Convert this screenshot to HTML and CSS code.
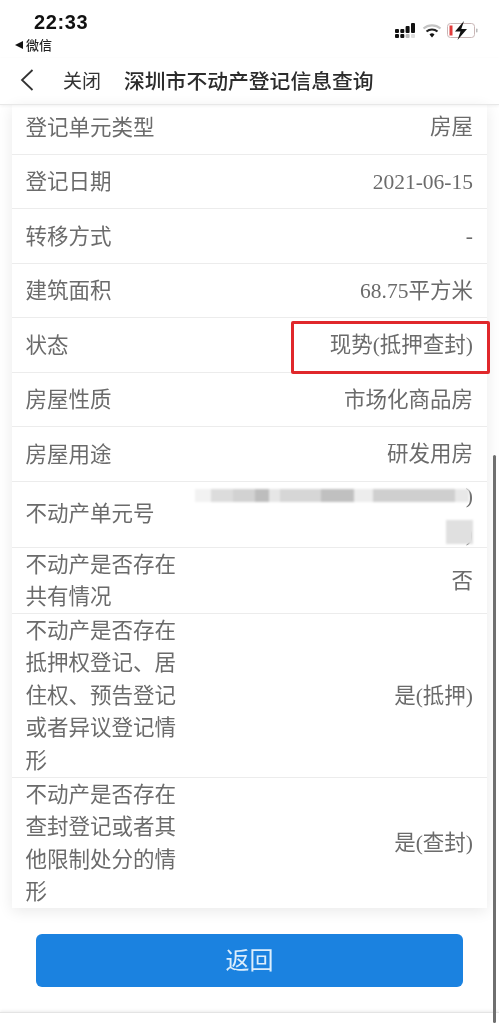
FILE: index.html
```html
<!DOCTYPE html>
<html lang="zh-CN">
<head>
<meta charset="utf-8">
<title>深圳市不动产登记信息查询</title>
<link rel="stylesheet" href="styles.css">
</head>
<body>
<div class="phone">
  <header class="status">
    <div class="status-left">
      <div class="time">22:33</div>
      <div class="source"><span class="tri"></span>微信</div>
    </div>
    <svg class="status-icons" width="84" height="20" viewBox="0 0 84 20">
      <g fill="#111">
        <rect x="0" y="9" width="4" height="4" rx="1"/><rect x="0" y="14" width="4" height="4" rx="1"/>
        <rect x="5.300" y="9" width="4" height="4" rx="1"/><rect x="5.300" y="14" width="4" height="4" rx="1"/>
        <rect x="10.600" y="6" width="4" height="7" rx="1"/><rect x="10.600" y="14" width="4" height="4" rx="1" fill="#bbb"/>
        <rect x="16" y="3" width="4" height="10" rx="1"/><rect x="16" y="14" width="4" height="4" rx="1" fill="#ddd"/>
      </g>
      <path d="M28.500 8.500a13 13 0 0 1 17 0" fill="none" stroke="#c4c4c4" stroke-width="2.200"/>
      <path d="M31.500 11.500a8.500 8.500 0 0 1 11 0" fill="none" stroke="#222" stroke-width="2.200"/>
      <path d="M34.500 14.500a3.500 3.500 0 0 1 5 0L37 17.500z" fill="#111"/>
      <rect x="52.500" y="3.500" width="27" height="14" rx="3" fill="#fff" stroke="#c9b6b6" stroke-width="1"/>
      <rect x="54.500" y="5.500" width="3" height="10" fill="#e23b3b"/>
      <rect x="81" y="8.500" width="1.500" height="4" rx=".7" fill="#bbb"/>
      <path d="M69 1 60 11.500h5.500L62.500 20l9.500-11h-5.700z" fill="#111"/>
    </svg>
  </header>

  <nav class="nav">
    <svg class="back" width="14" height="22" viewBox="0 0 14 22"><path d="M12.500 1 2 11l10.500 10" fill="none" stroke="#333" stroke-width="1.800"/></svg>
    <span class="close">关闭</span>
    <span class="title">深圳市不动产登记信息查询</span>
  </nav>

  <main class="content">
    <section class="card">
      <div class="row row-clipped"><div class="label">登记单元类型</div><div class="value">房屋</div></div>
      <div class="row"><div class="label">登记日期</div><div class="value">2021-06-15</div></div>
      <div class="row"><div class="label">转移方式</div><div class="value">-</div></div>
      <div class="row"><div class="label">建筑面积</div><div class="value">68.75平方米</div></div>
      <div class="row"><div class="label">状态</div><div class="value">现势(抵押查封)</div><div class="highlight"></div></div>
      <div class="row"><div class="label">房屋性质</div><div class="value">市场化商品房</div></div>
      <div class="row"><div class="label">房屋用途</div><div class="value">研发用房</div></div>
      <div class="row row-unit">
        <div class="label">不动产单元号</div>
        <div class="unit-value">
          <div class="unit-line"><div class="smear smear-long"></div><span>)</span></div>
          <div class="unit-line"><div class="smear smear-short"></div><span>)</span></div>
        </div>
      </div>
      <div class="row row-multi"><div class="label">不动产是否存在共有情况</div><div class="value">否</div></div>
      <div class="row row-multi"><div class="label">不动产是否存在抵押权登记、居住权、预告登记或者异议登记情形</div><div class="value">是(抵押)</div></div>
      <div class="row row-multi"><div class="label">不动产是否存在查封登记或者其他限制处分的情形</div><div class="value">是(查封)</div></div>
    </section>
    <div class="action"><button class="return" type="button">返回</button></div>
  </main>

  <footer class="bottom"></footer>
  <div class="scrollbar"></div>
</div>
</body>
</html>
```
FILE: styles.css
```css
* { box-sizing: border-box; }
html, body { margin: 0; padding: 0; background: #fff; }
body { font-family: "Liberation Serif", "Noto Sans CJK SC", serif; }

.phone {
  position: relative;
  width: 499px;
  height: 1030px;
  overflow: hidden;
  display: flex;
  flex-direction: column;
  background: #fff;
  filter: blur(.35px);
}

.status {
  height: 58px;
  flex: none;
  display: flex;
  justify-content: space-between;
  padding: 11px 20px 0 15px;
}
.time {
  font: 700 20px/22px "Liberation Sans", sans-serif;
  letter-spacing: .6px;
  color: #111;
  padding-left: 19px;
}
.source {
  display: flex;
  align-items: center;
  gap: 3px;
  margin-top: 2px;
  font: 500 13px/20px "Noto Sans CJK SC", sans-serif;
  color: #222;
}
.tri {
  width: 0;
  height: 0;
  border-style: solid;
  border-width: 4px 8px 4px 0;
  border-color: transparent #111 transparent transparent;
}
.status-icons { margin-top: 9px; }

.nav {
  height: 47px;
  flex: none;
  display: flex;
  align-items: center;
  padding: 0 0 3px 20px;
  font-family: "Noto Sans CJK SC", sans-serif;
  font-weight: 500;
  color: #333;
  border-bottom: 1px solid #e8e8e8;
  box-shadow: 0 1px 3px rgba(0,0,0,.06);
  position: relative;
  z-index: 1;
}
.close { margin-left: 29px; font-size: 19px; font-weight: 400; line-height: 26px; }
.title { margin-left: 23px; font-size: 20.800px; line-height: 28px; color: #2c2c2c; white-space: nowrap; }

.content {
  flex: 1;
  background: #fff;
  display: flex;
  flex-direction: column;
}

.card {
  margin: 0 12px;
  background: #fff;
  box-shadow: 0 3px 14px rgba(0,0,0,.09);
  color: #6b6b6b;
  font-size: 21.500px;
}

.row {
  position: relative;
  display: flex;
  justify-content: space-between;
  align-items: center;
  height: 54.500px;
  padding: 0 14px 0 13.500px;
  border-bottom: 1px solid #ececec;
}
.row:last-child { border-bottom: none; }
.row-clipped { height: 49.500px; padding-bottom: 5px; }
.row-unit { height: 66px; }
.row-multi { height: auto; }

.label { width: 152px; line-height: 32.600px; flex: none; margin-top: 3px; }
.value { white-space: nowrap; line-height: 30px; padding-top: 1px; }
.row-multi .label { margin-top: 1px; margin-bottom: -1px; }
.row-unit .label { margin-top: 1px; }

.highlight {
  position: absolute;
  left: 279px;
  right: -3px;
  top: 3px;
  height: 53px;
  border: 3px solid #e0282b;
  border-radius: 2px;
}

.unit-value {
  width: 278px;
  height: 65px;
  flex: none;
  display: flex;
  flex-direction: column;
  gap: 10px;
}
.unit-line {
  height: 28px;
  display: flex;
  justify-content: flex-end;
  align-items: center;
  line-height: 28px;
}
.smear {
  filter: blur(1px);
  margin-right: -3px;
}
.smear-long {
  width: 277px;
  height: 13px;
  background: linear-gradient(90deg, #f2f2f2 0 6%, #dcdcdc 6% 14%, #d2d2d2 14% 22%, #bdbdbd 22% 27%, #e6e6e6 27% 31%, #d6d6d6 31% 46%, #c0c0c0 46% 58%, #ededed 58% 65%, #cfcfcf 65% 95%, #e8e8e8 95% 100%);
}
.smear-short { width: 27px; height: 24px; margin-right: -7px; margin-top: -4px; background: #e0e0e0; }

.action {
  padding: 26px 36px 0;
}
.return {
  display: block;
  width: 100%;
  height: 53px;
  border: none;
  border-radius: 6px;
  background: #1b82e0;
  color: #dceefc;
  font-family: "Noto Sans CJK SC", sans-serif;
  font-size: 24px;
  line-height: 50px;
  padding: 0 0 4px;
}

.bottom {
  height: 18px;
  flex: none;
  border-top: 1px solid #e4e4e4;
  box-shadow: 0 -1px 3px rgba(0,0,0,.08);
  background: #fff;
}

.scrollbar {
  position: absolute;
  top: 455px;
  right: 3px;
  width: 3px;
  height: 568px;
  border-radius: 2px;
  background: #6f6f6f;
}
```
